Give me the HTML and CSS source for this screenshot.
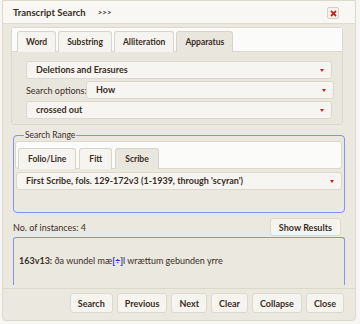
FILE: index.html
```html
<!DOCTYPE html>
<html lang="en">
  <head>
    <meta charset="UTF-8" />
    <title>Transcript Search</title>
    <link rel="stylesheet" href="styles.css">
  </head>
  <body>
    <div class="dialog">
      <div class="titlebar">
        <span class="title">Transcript Search</span>
        <span class="more">&gt;&gt;&gt;</span>
        <button class="close-x" title="Close">
          <svg width="7" height="7" viewBox="0 0 7 7"><path d="M1 1L6 6M6 1L1 6" stroke="#c8261c" stroke-width="1.8"/></svg>
        </button>
      </div>

      <div class="tabs main-tabs">
        <ul class="tab-bar">
          <li class="tab">Word</li>
          <li class="tab">Substring</li>
          <li class="tab">Alliteration</li>
          <li class="tab active">Apparatus</li>
        </ul>
        <div class="tab-panel">
          <div class="select wide">Deletions and Erasures<span class="arrow"></span></div>
          <div class="option-row">
            <label>Search options:</label>
            <div class="select">How<span class="arrow"></span></div>
          </div>
          <div class="select wide">crossed out<span class="arrow"></span></div>
        </div>
      </div>

      <fieldset class="range">
        <legend>Search Range</legend>
        <div class="tabs">
          <ul class="tab-bar">
            <li class="tab">Folio/Line</li>
            <li class="tab">Fitt</li>
            <li class="tab active">Scribe</li>
          </ul>
          <div class="range-panel">
            <div class="select">First Scribe, fols. 129-172v3 (1-1939, through 'scyran')<span class="arrow"></span></div>
          </div>
        </div>
      </fieldset>

      <div class="count-row">
        <span class="count">No. of instances: 4</span>
        <button class="btn">Show Results</button>
      </div>

      <div class="results">
        <p><b>163v13:</b> ða wundel mæ<span class="mark">[÷]</span>l wrættum gebunden yrre</p>
      </div>

      <div class="actions">
        <button class="btn">Search</button>
        <button class="btn">Previous</button>
        <button class="btn">Next</button>
        <button class="btn">Clear</button>
        <button class="btn">Collapse</button>
        <button class="btn">Close</button>
      </div>
    </div>
  </body>
</html>
```

FILE: styles.css
```css
* {
  margin: 0;
  padding: 0;
  box-sizing: border-box;
}

body {
  background: #f7f6f2;
  color: #3a2e1f;
  font-family: 'Lato', sans-serif;
  font-size: 9px;
}

.dialog {
  width: 354px;
  height: 321px;
  margin-left: 2px;
  background: #ebe8df;
  border: 1px solid #dcd8cc;
  border-radius: 0 0 4px 4px;
  display: flex;
  flex-direction: column;
}

.titlebar {
  height: 23px;
  flex: none;
  background: #f8f7f3;
  border-bottom: 1px solid #dedad0;
  display: flex;
  align-items: center;
  padding: 0 0 0 10px;
  font-weight: 700;
  font-size: 9.5px;
}

.more {
  margin-left: 12px;
  font-size: 8px;
  flex: 1;
}

.close-x {
  width: 12px;
  height: 12px;
  margin-right: 16px;
  margin-top: 2px;
  background: #f5f3ee;
  border: 1px solid #d5d1c5;
  border-radius: 2px;
  display: flex;
  align-items: center;
  justify-content: center;
}

.tabs {
  border: 1px solid #dcd8cc;
  border-radius: 3px;
}

.main-tabs {
  flex: none;
  margin: 3px 12px 0 8px;
}

.tab-bar {
  list-style: none;
  display: flex;
  gap: 2px;
  background: #fbfbf9;
  padding: 3px 5px 0;
  border-bottom: 1px solid #dcd8cc;
}

.tab {
  font-size: 8.5px;
  font-weight: 700;
  line-height: 12px;
  padding: 4px 8px 3px;
  background: #f5f4f0;
  border: 1px solid #d8d4c9;
  border-bottom: none;
  border-radius: 3px 3px 0 0;
  margin-bottom: -1px;
}

.tab.active {
  background: #e9e6dd;
  padding-bottom: 4px;
}

.tab-panel {
  background: #e9e6dd;
  padding: 9px 8px 5px 14px;
  display: flex;
  flex-direction: column;
  gap: 2px;
}

.select {
  position: relative;
  flex: 1;
  height: 18px;
  line-height: 16px;
  padding-left: 9px;
  background: #f6f5f1;
  border: 1px solid #dcd8cd;
  border-radius: 3px;
  font-weight: 700;
  white-space: nowrap;
}

.select.wide {
  margin-right: 2px;
}

.arrow {
  position: absolute;
  right: 7px;
  top: 7px;
  border: 2.5px solid transparent;
  border-top: 3px solid #c0281e;
}

.option-row {
  display: flex;
  align-items: center;
  height: 18px;
}

.option-row label {
  font-weight: 400;
  width: 60px;
  white-space: nowrap;
}

.range {
  flex: none;
  margin: 5px 10px 0 10px;
  border: 1px solid #8193ea;
  border-radius: 4px;
  padding: 0 2px 22px 1px;
}

.range legend {
  margin-left: 9px;
  padding: 0 1px;
  font-size: 8.5px;
  line-height: 11px;
}

.range .tabs {
  border: none;
}

.range .tab-bar {
  border: 1px solid #dcd8cc;
  border-radius: 3px;
  padding: 6px 2px 0;
  gap: 3px;
}

.range .tab {
  padding-left: 9px;
  padding-right: 9px;
}

.range-panel {
  padding: 3px 0 0 1px;
  display: flex;
}

.count-row {
  flex: none;
  display: flex;
  justify-content: space-between;
  align-items: center;
  margin: 5px 14px 0 10px;
}

.btn {
  font-family: 'Lato', sans-serif;
  font-size: 9px;
  font-weight: 700;
  color: #3a2e1f;
  background: #f6f4ef;
  border: 1px solid #ddd9ce;
  border-radius: 3px;
  height: 18px;
  padding: 0 8px;
}

.results {
  flex: none;
  margin: 1px 10px 0 10px;
  height: 48px;
  border: 1px solid #8193ea;
  border-bottom: none;
  border-radius: 3px 3px 0 0;
  padding: 17px 5px 0;
}

.mark {
  color: #1b36e0;
  font-weight: 700;
}

.results b {
  font-weight: 700;
}

.actions {
  flex: none;
  border-top: 1px solid #dcd8cc;
  margin-top: 3px;
  padding: 4px 11px 0 0;
  display: flex;
  justify-content: flex-end;
  gap: 4px;
}

.actions .btn {
  height: 20px;
  padding: 0 7px;
}
```
